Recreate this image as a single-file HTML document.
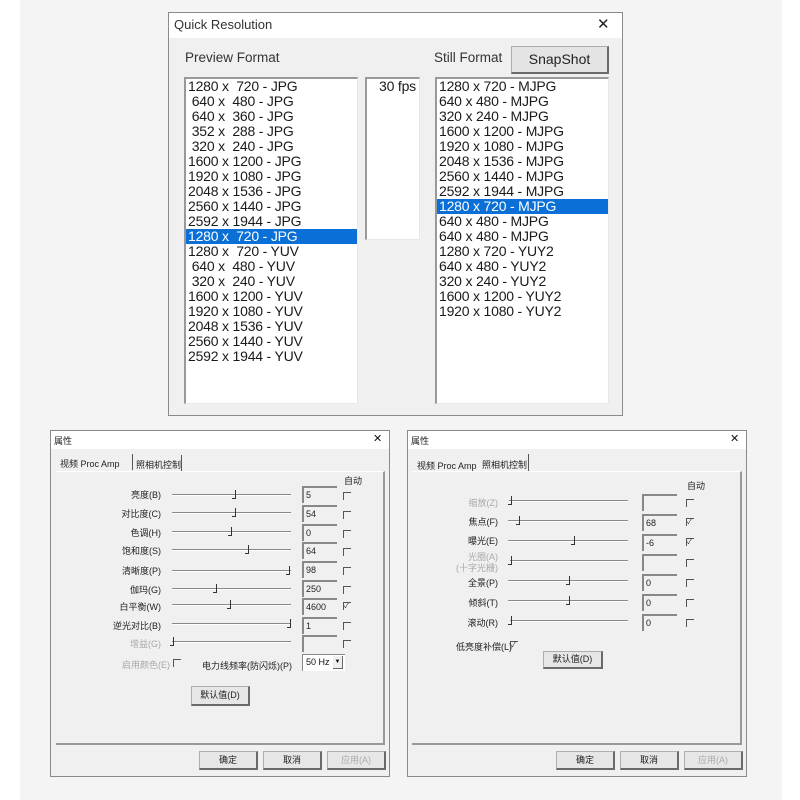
<!DOCTYPE html>
<html><head><meta charset="utf-8"><style>
*{margin:0;padding:0;box-sizing:border-box}
body{width:800px;height:800px;background:#fff;position:relative;overflow:hidden;font-family:"Liberation Sans","Noto Sans CJK SC",sans-serif;color:#111}
.bg{position:absolute;left:20px;top:0;width:762px;height:800px;background:#f4f4f4}
.a{position:absolute}
.dlg{position:absolute;background:#f0f0f0;border:1px solid #8a8a8a}
.tb{position:absolute;left:0;top:0;right:0;background:#fff}
.list{position:absolute;background:#fff;border-top:2px solid #999;border-left:2px solid #999;border-right:1px solid #e8e8e8;border-bottom:1px solid #e8e8e8}
.row{height:15px;line-height:15px;font-size:14px;padding-left:2px;white-space:pre;color:#1a1a1a;letter-spacing:-0.2px}
.sel{background:#0a6fd6;color:#fff}
.btn{position:absolute;background:#e6e6e6;border:1px solid #adadad;border-right:2px solid #6a6a6a;border-bottom:2px solid #6a6a6a;text-align:center;font-size:9px;color:#222}
.lbl{position:absolute;font-size:9px;color:#222;text-align:right;white-space:nowrap}
.dis{color:#a8a8a8}
.trk{position:absolute;height:2px;border-top:1px solid #888;border-bottom:1px solid #fff}
.th{position:absolute;width:4px;height:9px;border-right:1px solid #333;border-bottom:1px solid #333}
.ed{position:absolute;width:35px;height:17px;background:#f0f0f0;border-top:2px solid #888;border-left:2px solid #888;font-size:9px;padding-left:2px;line-height:14px;color:#222}
.cb{position:absolute;width:8px;height:8px;border-top:1px solid #555;border-left:1px solid #555;font-size:7px;line-height:8px;color:#222}
.sm{font-size:9px;color:#222}
</style></head><body>
<div class="bg"></div>

<!-- Quick Resolution -->
<div class="dlg" style="left:168px;top:12px;width:455px;height:404px">
 <div class="tb" style="height:25px"><span class="a" style="left:5px;top:4px;font-size:13px;color:#333">Quick Resolution</span><span class="a" style="left:428px;top:2px;font-size:15px;color:#222">✕</span></div>
 <span class="a" style="left:16px;top:37px;font-size:13.5px;color:#333">Preview Format</span>
 <span class="a" style="left:265px;top:37px;font-size:13.5px;color:#333">Still Format</span>
 <div class="btn" style="left:342px;top:33px;width:98px;height:28px;font-size:14px;line-height:25px;background:#e4e4e4">SnapShot</div>
 <div class="list" style="left:15px;top:64px;width:174px;height:327px;padding-top:0px">
  <div class="row">1280 x  720 - JPG</div><div class="row"> 640 x  480 - JPG</div><div class="row"> 640 x  360 - JPG</div><div class="row"> 352 x  288 - JPG</div><div class="row"> 320 x  240 - JPG</div><div class="row">1600 x 1200 - JPG</div><div class="row">1920 x 1080 - JPG</div><div class="row">2048 x 1536 - JPG</div><div class="row">2560 x 1440 - JPG</div><div class="row">2592 x 1944 - JPG</div><div class="row sel">1280 x  720 - JPG</div><div class="row">1280 x  720 - YUV</div><div class="row"> 640 x  480 - YUV</div><div class="row"> 320 x  240 - YUV</div><div class="row">1600 x 1200 - YUV</div><div class="row">1920 x 1080 - YUV</div><div class="row">2048 x 1536 - YUV</div><div class="row">2560 x 1440 - YUV</div><div class="row">2592 x 1944 - YUV</div>
 </div>
 <div class="list" style="left:196px;top:64px;width:55px;height:163px;padding-top:0px"><div class="row" style="text-align:right;padding-right:3px">30 fps</div></div>
 <div class="list" style="left:266px;top:64px;width:174px;height:327px;padding-top:0px">
  <div class="row">1280 x 720 - MJPG</div><div class="row">640 x 480 - MJPG</div><div class="row">320 x 240 - MJPG</div><div class="row">1600 x 1200 - MJPG</div><div class="row">1920 x 1080 - MJPG</div><div class="row">2048 x 1536 - MJPG</div><div class="row">2560 x 1440 - MJPG</div><div class="row">2592 x 1944 - MJPG</div><div class="row sel">1280 x 720 - MJPG</div><div class="row">640 x 480 - MJPG</div><div class="row">640 x 480 - MJPG</div><div class="row">1280 x 720 - YUY2</div><div class="row">640 x 480 - YUY2</div><div class="row">320 x 240 - YUY2</div><div class="row">1600 x 1200 - YUY2</div><div class="row">1920 x 1080 - YUY2</div>
 </div>
</div>

<!-- Left properties dialog -->
<div class="dlg" style="left:50px;top:430px;width:340px;height:347px">
 <div class="tb" style="height:18px"><span class="a sm" style="left:3px;top:3px">属性</span><span class="a" style="left:322px;top:1px;font-size:11px">✕</span></div>
 <span class="a sm" style="left:9px;top:26px">视频 Proc Amp</span>
 <div class="a" style="left:81px;top:23px;width:1px;height:16px;background:#555"></div>
 <span class="a sm" style="left:85px;top:27px">照相机控制</span>
 <div class="a" style="left:130px;top:24px;width:1px;height:16px;background:#555"></div>
 <div class="a" style="left:5px;top:40px;width:329px;height:274px;border-right:2px solid #999;border-bottom:2px solid #999;border-top:1px solid #fff"></div>
 <span class="a sm" style="left:293px;top:43px">自动</span>
</div>
<div class="lbl" style="right:639px;top:488px">亮度(B)</div>
<div class="lbl" style="right:639px;top:507px">对比度(C)</div>
<div class="lbl" style="right:639px;top:526px">色调(H)</div>
<div class="lbl" style="right:639px;top:544px">饱和度(S)</div>
<div class="lbl" style="right:639px;top:564px">清晰度(P)</div>
<div class="lbl" style="right:639px;top:583px">伽玛(G)</div>
<div class="lbl" style="right:639px;top:600px">白平衡(W)</div>
<div class="lbl" style="right:639px;top:619px">逆光对比(B)</div>
<div class="lbl dis" style="right:639px;top:637px">增益(G)</div>
<div class="trk" style="left:172px;top:494px;width:119px"></div><div class="th" style="left:232px;top:490px"></div>
<div class="trk" style="left:172px;top:512px;width:119px"></div><div class="th" style="left:232px;top:508px"></div>
<div class="trk" style="left:172px;top:531px;width:119px"></div><div class="th" style="left:228px;top:527px"></div>
<div class="trk" style="left:172px;top:549px;width:119px"></div><div class="th" style="left:245px;top:545px"></div>
<div class="trk" style="left:172px;top:570px;width:119px"></div><div class="th" style="left:286px;top:566px"></div>
<div class="trk" style="left:172px;top:588px;width:119px"></div><div class="th" style="left:213px;top:584px"></div>
<div class="trk" style="left:172px;top:604px;width:119px"></div><div class="th" style="left:227px;top:600px"></div>
<div class="trk" style="left:172px;top:623px;width:119px"></div><div class="th" style="left:287px;top:619px"></div>
<div class="trk" style="left:172px;top:641px;width:119px"></div><div class="th" style="left:170px;top:637px"></div>
<div class="ed" style="left:302px;top:486px">5</div>
<div class="ed" style="left:302px;top:505px">54</div>
<div class="ed" style="left:302px;top:524px">0</div>
<div class="ed" style="left:302px;top:542px">64</div>
<div class="ed" style="left:302px;top:561px">98</div>
<div class="ed" style="left:302px;top:580px">250</div>
<div class="ed" style="left:302px;top:598px">4600</div>
<div class="ed" style="left:302px;top:617px">1</div>
<div class="ed" style="left:302px;top:635px"></div>
<div class="cb" style="left:343px;top:492px"></div>
<div class="cb" style="left:343px;top:511px"></div>
<div class="cb" style="left:343px;top:530px"></div>
<div class="cb" style="left:343px;top:548px"></div>
<div class="cb" style="left:343px;top:567px"></div>
<div class="cb" style="left:343px;top:586px"></div>
<div class="cb" style="left:343px;top:602px">✓</div>
<div class="cb" style="left:343px;top:622px"></div>
<div class="cb" style="left:343px;top:640px"></div>
<div class="lbl dis" style="right:630px;top:658px">启用颜色(E)</div>
<div class="cb" style="left:173px;top:659px"></div>
<div class="lbl" style="right:508px;top:659px">电力线频率(防闪烁)(P)</div>
<div class="a" style="left:302px;top:654px;width:43px;height:17px;background:#fff;border-top:1px solid #888;border-left:1px solid #888;font-size:9px;padding:2px 0 0 3px">50 Hz</div>
<div class="a" style="left:333px;top:656px;width:10px;height:13px;background:#eee;border-right:1px solid #666;border-bottom:1px solid #666;font-size:6px;text-align:center;line-height:13px">▼</div>
<div class="btn" style="left:191px;top:686px;width:59px;height:20px;line-height:17px">默认值(D)</div>
<div class="btn" style="left:199px;top:751px;width:59px;height:19px;line-height:16px">确定</div>
<div class="btn" style="left:263px;top:751px;width:59px;height:19px;line-height:16px">取消</div>
<div class="btn dis" style="left:327px;top:751px;width:59px;height:19px;line-height:16px;color:#aaa">应用(A)</div>

<!-- Right properties dialog -->
<div class="dlg" style="left:407px;top:430px;width:340px;height:347px">
 <div class="tb" style="height:18px"><span class="a sm" style="left:3px;top:3px">属性</span><span class="a" style="left:322px;top:1px;font-size:11px">✕</span></div>
 <span class="a sm" style="left:9px;top:28px">视频 Proc Amp</span>
 <span class="a sm" style="left:74px;top:27px">照相机控制</span>
 <div class="a" style="left:120px;top:23px;width:1px;height:17px;background:#555"></div>
 <div class="a" style="left:4px;top:40px;width:330px;height:274px;border-right:2px solid #999;border-bottom:2px solid #999;border-top:1px solid #fff"></div>
 <span class="a sm" style="left:279px;top:48px">自动</span>
</div>
<div class="lbl dis" style="right:302px;top:496px">缩放(Z)</div>
<div class="lbl" style="right:302px;top:515px">焦点(F)</div>
<div class="lbl" style="right:302px;top:534px">曝光(E)</div>
<div class="lbl dis" style="right:302px;top:552px;text-align:right;line-height:11px">光圈(A)<br>(十字光栅)</div>
<div class="lbl" style="right:302px;top:576px">全景(P)</div>
<div class="lbl" style="right:302px;top:596px">倾斜(T)</div>
<div class="lbl" style="right:302px;top:616px">滚动(R)</div>
<div class="trk" style="left:509px;top:500px;width:119px"></div><div class="th" style="left:508px;top:496px"></div>
<div class="trk" style="left:508px;top:520px;width:120px"></div><div class="th" style="left:516px;top:516px"></div>
<div class="trk" style="left:508px;top:540px;width:120px"></div><div class="th" style="left:571px;top:536px"></div>
<div class="trk" style="left:510px;top:560px;width:118px"></div><div class="th" style="left:508px;top:556px"></div>
<div class="trk" style="left:508px;top:580px;width:120px"></div><div class="th" style="left:566px;top:576px"></div>
<div class="trk" style="left:508px;top:600px;width:120px"></div><div class="th" style="left:566px;top:596px"></div>
<div class="trk" style="left:510px;top:620px;width:118px"></div><div class="th" style="left:508px;top:616px"></div>
<div class="ed" style="left:642px;top:494px"></div>
<div class="ed" style="left:642px;top:514px">68</div>
<div class="ed" style="left:642px;top:534px">-6</div>
<div class="ed" style="left:642px;top:554px"></div>
<div class="ed" style="left:642px;top:574px">0</div>
<div class="ed" style="left:642px;top:594px">0</div>
<div class="ed" style="left:642px;top:614px">0</div>
<div class="cb" style="left:686px;top:499px"></div>
<div class="cb" style="left:686px;top:518px">✓</div>
<div class="cb" style="left:686px;top:538px">✓</div>
<div class="cb" style="left:686px;top:559px"></div>
<div class="cb" style="left:686px;top:579px"></div>
<div class="cb" style="left:686px;top:599px"></div>
<div class="cb" style="left:686px;top:619px"></div>
<div class="lbl" style="left:456px;top:640px">低亮度补偿(L)</div>
<div class="cb" style="left:510px;top:641px">✓</div>
<div class="btn" style="left:543px;top:651px;width:60px;height:18px;line-height:15px">默认值(D)</div>
<div class="btn" style="left:556px;top:751px;width:59px;height:19px;line-height:16px">确定</div>
<div class="btn" style="left:620px;top:751px;width:59px;height:19px;line-height:16px">取消</div>
<div class="btn dis" style="left:684px;top:751px;width:59px;height:19px;line-height:16px;color:#aaa">应用(A)</div>
</body></html>
